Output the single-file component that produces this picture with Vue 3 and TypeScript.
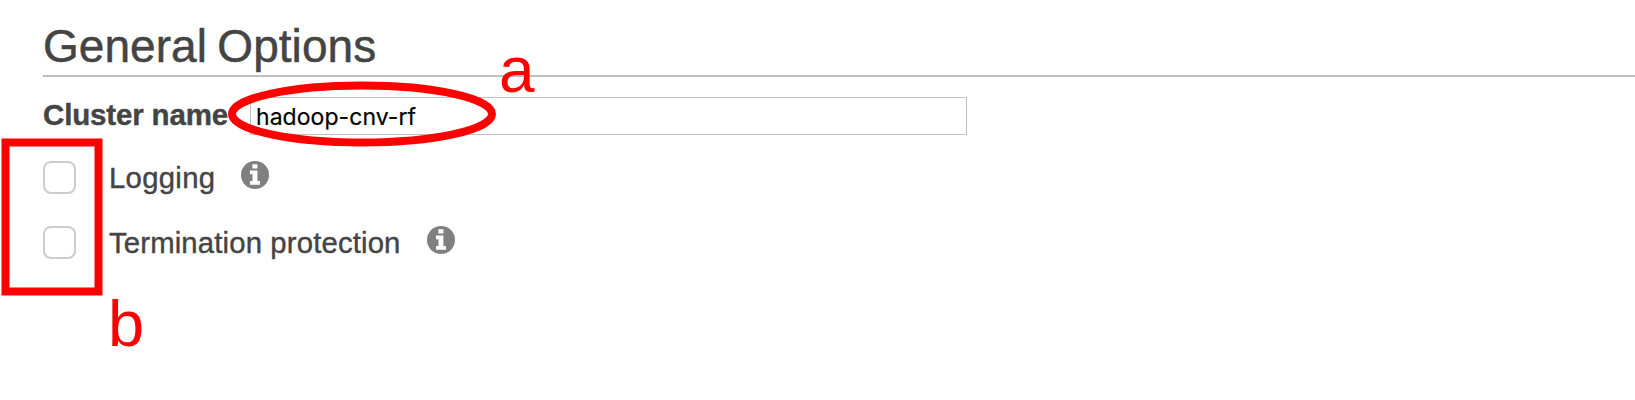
<script setup lang="ts">
import { reactive, ref } from 'vue'

interface Option {
  id: string
  label: string
  checked: boolean
}

const clusterName = ref('hadoop-cnv-rf')

const options = reactive<Option[]>([
  { id: 'logging', label: 'Logging', checked: false },
  { id: 'termination', label: 'Termination protection', checked: false },
])
</script>

<template>
  <main class="page">
    <h1 class="title">General Options</h1>
    <div class="field">
      <label class="field-label" for="cluster-name">Cluster name</label>
      <input id="cluster-name" v-model="clusterName" class="field-input" type="text" spellcheck="false" />
    </div>
    <div v-for="option in options" :key="option.id" class="option" :class="option.id">
      <input :id="option.id" v-model="option.checked" class="checkbox" type="checkbox" />
      <label class="option-label" :for="option.id">{{ option.label }}</label>
      <svg class="info" viewBox="0 0 28 28" aria-hidden="true">
        <circle cx="14" cy="14" r="14" />
        <path d="M11.4 3.2h5v4.4h-5zM9 9.6h7.4v10.3h2.6v3.8H9v-3.8h2.5v-6.7H9z" />
      </svg>
    </div>

    <svg class="ellipse" viewBox="0 0 270 66" aria-hidden="true">
      <ellipse cx="135" cy="33" rx="130" ry="28.5" />
    </svg>
    <span class="mark mark-a">a</span>
    <svg class="frame" viewBox="0 0 102 158" aria-hidden="true">
      <rect x="4.5" y="4.5" width="93" height="149" />
    </svg>
    <span class="mark mark-b">b</span>
  </main>
</template>

<style>
body {
  margin: 0;
  background: #fff;
}
</style>

<style scoped>
.page {
  position: relative;
  box-sizing: border-box;
  height: 400px;
  padding-left: 43px;
  overflow: hidden;
  color: #444;
  font-family: "Liberation Sans", Arial, sans-serif;
}
.title {
  box-sizing: border-box;
  height: 77px;
  margin: 0;
  padding-top: 20px;
  border-bottom: 2px solid #c0c0c0;
  font-size: 46px;
  font-weight: 400;
  line-height: 52px;
  letter-spacing: 0.05px;
  word-spacing: -2.5px;
  -webkit-text-stroke: 0.5px #444;
}
.field {
  display: flex;
  margin-top: 20px;
  height: 37px;
}
.field-label {
  width: 207px;
  font-size: 29.5px;
  font-weight: 700;
  line-height: 36px;
  letter-spacing: -0.16px;
  white-space: nowrap;
  -webkit-text-stroke: 0.4px #444;
}
.field-input {
  box-sizing: border-box;
  width: 717px;
  height: 38px;
  padding: 1px 5px 0;
  border: 1px solid #c0c0c0;
  outline: none;
  background: transparent;
  color: #000;
  font-family: Inter, sans-serif;
  font-size: 23px;
  letter-spacing: 0.05px;
  -webkit-text-stroke: 0.2px #000;
}
.option {
  display: flex;
  align-items: flex-start;
  height: 65px;
}
.logging {
  margin-top: 26.5px;
}
.checkbox {
  appearance: none;
  box-sizing: border-box;
  width: 33px;
  height: 33px;
  margin: 0;
  border: 2px solid #ccc;
  border-radius: 8px;
  background: #fff;
}
.option-label {
  margin-left: 33px;
  font-size: 29.3px;
  line-height: 34px;
  letter-spacing: 0.15px;
  white-space: nowrap;
  -webkit-text-stroke: 0.4px #444;
}
.logging .option-label {
  letter-spacing: 0.3px;
}
.info {
  width: 28px;
  height: 28px;
  margin: 0.5px 0 0 26px;
}
.info circle {
  fill: #808080;
}
.info path {
  fill: #fff;
}
.ellipse {
  position: absolute;
  left: 227px;
  top: 81px;
  width: 270px;
  height: 66px;
}
.ellipse ellipse,
.frame rect {
  fill: none;
  stroke: #f00;
  stroke-width: 8;
}
.frame {
  position: absolute;
  left: 1px;
  top: 138px;
  width: 102px;
  height: 158px;
}
.mark {
  position: absolute;
  color: #f00;
  font-size: 64px;
  line-height: 64px;
}
.mark-a {
  left: 499px;
  top: 38px;
}
.mark-b {
  left: 108px;
  top: 292px;
  font-size: 65px;
}
</style>
